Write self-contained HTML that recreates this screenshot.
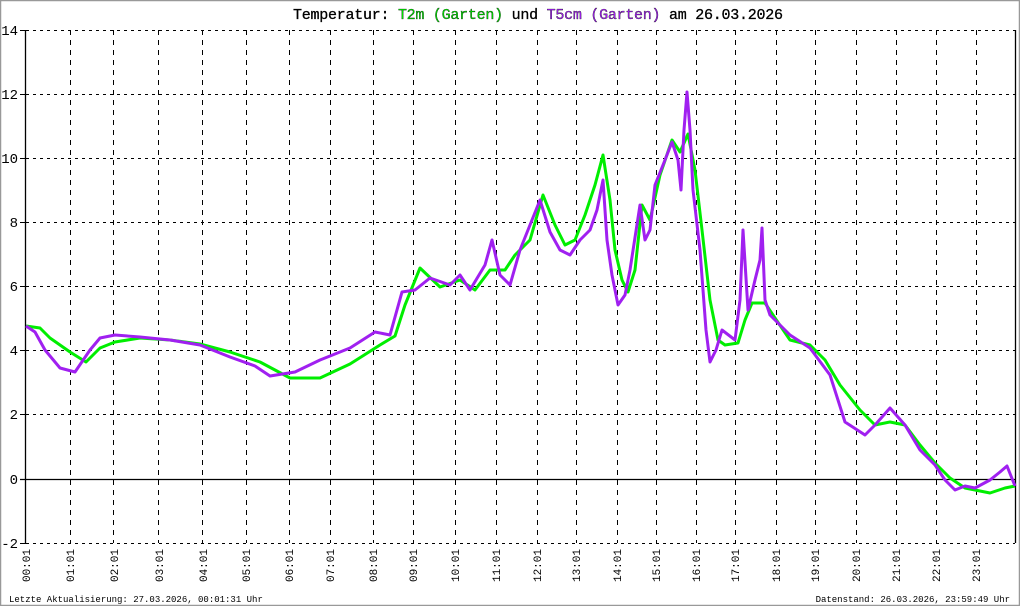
<!DOCTYPE html>
<html><head><meta charset="utf-8"><style>
html,body{margin:0;padding:0;background:#fff}
svg{display:block}
text{font-family:"Liberation Mono",monospace}
</style></head><body>
<svg width="1020" height="606" viewBox="0 0 1020 606" xmlns="http://www.w3.org/2000/svg">
<rect x="0" y="0" width="1020" height="606" fill="#fff"/>
<rect x="0.5" y="0.5" width="1019" height="605" fill="none" stroke="#999" stroke-width="1.5"/>
<text x="293" y="19" font-size="15" textLength="490" lengthAdjust="spacing" stroke-width="0.3" stroke="currentColor"><tspan fill="#000">Temperatur: </tspan><tspan fill="#00e000">T2m (Garten)</tspan><tspan fill="#000"> und </tspan><tspan fill="#a020f0">T5cm (Garten)</tspan><tspan fill="#000"> am 26.03.2026</tspan></text>
<g stroke="#000" stroke-width="1" stroke-dasharray="3,4" fill="none">
<path d="M26 30.5H1015M26 94.5H1015M26 158.5H1015M26 222.5H1015M26 286.5H1015M26 350.5H1015M26 414.5H1015M26 543.5H1015"/>
</g>
<g stroke="#000" stroke-width="1" stroke-dasharray="5,5" fill="none">
<path d="M70.5 30V543M113.5 30V543M158.5 30V543M202.5 30V543M246.5 30V543M289.5 30V543M330.5 30V543M373.5 30V543M413.5 30V543M455.5 30V543M496.5 30V543M537.5 30V543M576.5 30V543M617.5 30V543M656.5 30V543M696.5 30V543M735.5 30V543M776.5 30V543M815.5 30V543M856.5 30V543M896.5 30V543M936.5 30V543M976.5 30V543"/>
</g>
<path d="M25.5 30V543M1015.5 30V543M20 479.5H1015" stroke="#000" stroke-width="1.3" fill="none"/>
<path d="M20 30.5H26M20 94.5H26M20 158.5H26M20 222.5H26M20 286.5H26M20 350.5H26M20 414.5H26M20 543.5H26" stroke="#000"/>
<g font-size="14" text-anchor="end">
<text x="18" y="35">14</text><text x="18" y="99">12</text><text x="18" y="163">10</text><text x="18" y="227">8</text><text x="18" y="291">6</text><text x="18" y="355">4</text><text x="18" y="419">2</text><text x="18" y="484">0</text><text x="18" y="548">-2</text>
</g>
<g font-size="11" text-anchor="end">
<text transform="translate(30,549) rotate(-90)">00:01</text>
<text transform="translate(74,549) rotate(-90)">01:01</text>
<text transform="translate(118,549) rotate(-90)">02:01</text>
<text transform="translate(163,549) rotate(-90)">03:01</text>
<text transform="translate(207,549) rotate(-90)">04:01</text>
<text transform="translate(250,549) rotate(-90)">05:01</text>
<text transform="translate(293,549) rotate(-90)">06:01</text>
<text transform="translate(334,549) rotate(-90)">07:01</text>
<text transform="translate(377,549) rotate(-90)">08:01</text>
<text transform="translate(417,549) rotate(-90)">09:01</text>
<text transform="translate(459,549) rotate(-90)">10:01</text>
<text transform="translate(500,549) rotate(-90)">11:01</text>
<text transform="translate(541,549) rotate(-90)">12:01</text>
<text transform="translate(580,549) rotate(-90)">13:01</text>
<text transform="translate(621,549) rotate(-90)">14:01</text>
<text transform="translate(660,549) rotate(-90)">15:01</text>
<text transform="translate(700,549) rotate(-90)">16:01</text>
<text transform="translate(739,549) rotate(-90)">17:01</text>
<text transform="translate(780,549) rotate(-90)">18:01</text>
<text transform="translate(819,549) rotate(-90)">19:01</text>
<text transform="translate(860,549) rotate(-90)">20:01</text>
<text transform="translate(900,549) rotate(-90)">21:01</text>
<text transform="translate(940,549) rotate(-90)">22:01</text>
<text transform="translate(980,549) rotate(-90)">23:01</text>
</g>
<text x="9" y="602" font-size="9">Letzte Aktualisierung: 27.03.2026, 00:01:31 Uhr</text>
<text x="1010" y="602" font-size="9" text-anchor="end">Datenstand: 26.03.2026, 23:59:49 Uhr</text>
<polyline fill="none" stroke="#00ee00" stroke-width="3" stroke-linejoin="round" points="26,326 40,328 50,338 70,352 86,362 100,348 115,342 140,338 170,340 200,344 230,352 260,362 290,378 320,378 350,364 380,345 395,336 405,305 420,268 440,287 460,280 475,290 490,270 505,270 515,255 530,240 543,195 555,225 565,245 575,240 585,215 595,185 603,155 610,200 615,250 622,280 628,292 635,270 642,205 650,220 660,175 672,140 680,152 688,134 695,170 702,230 710,300 718,340 725,345 738,343 745,320 752,303 765,303 775,318 790,340 810,345 825,360 840,385 860,410 875,425 890,422 905,425 920,445 935,463 950,478 965,488 990,493 1005,488 1015,486"/>
<polyline fill="none" stroke="#a020f0" stroke-width="3" stroke-linejoin="round" points="26,326 35,332 45,350 60,368 75,372 90,350 100,338 115,335 140,337 170,340 200,345 230,357 255,366 270,376 295,372 320,360 350,348 375,332 390,335 402,292 415,290 430,278 450,285 460,275 470,290 485,265 492,240 500,275 510,285 520,250 530,225 540,200 550,232 560,250 570,255 580,240 590,230 597,210 603,180 607,240 612,275 618,305 625,295 630,270 640,205 645,240 650,230 655,185 665,160 672,142 678,160 681,190 684,130 687,92 690,130 693,190 700,250 706,330 710,362 716,350 722,330 735,340 740,300 743,230 748,310 755,280 760,260 762,228 765,300 770,315 790,335 810,348 830,375 845,422 865,435 875,425 890,408 905,425 920,450 935,465 945,480 955,490 965,486 975,488 990,480 1000,472 1007,466 1015,486"/>
</svg>
</body></html>
